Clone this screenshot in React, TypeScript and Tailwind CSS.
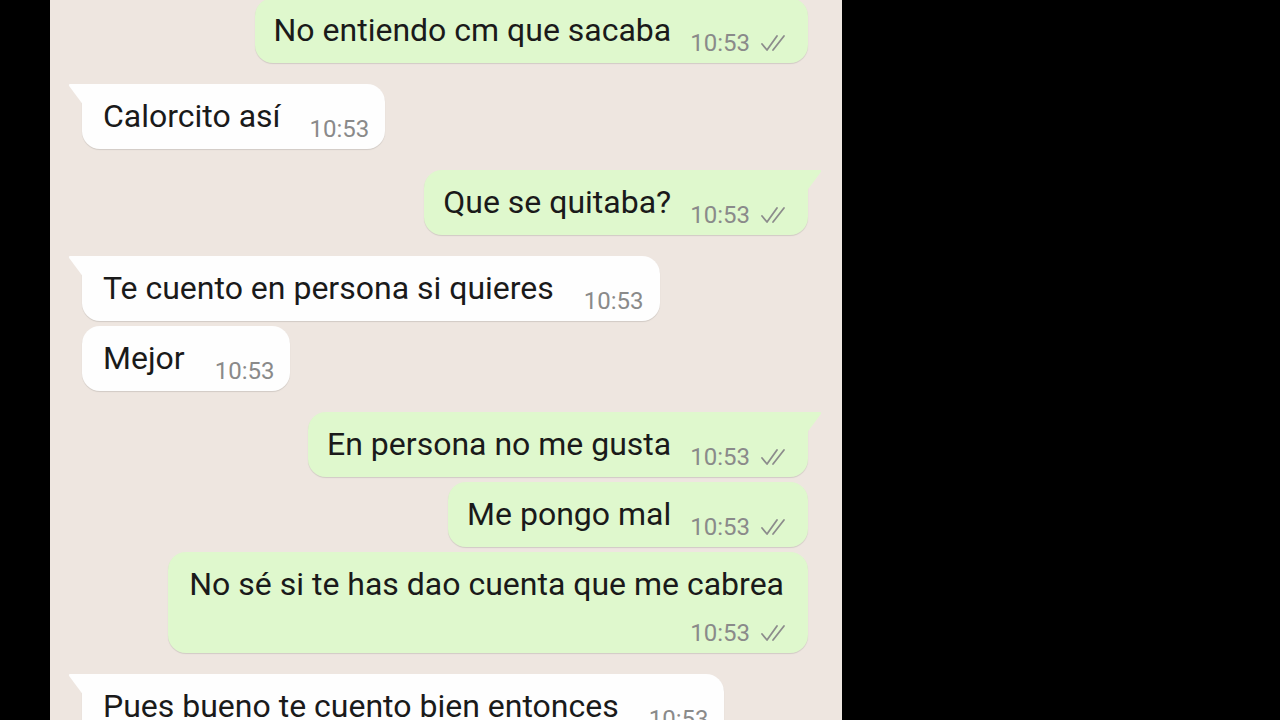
import React from 'react'

type Msg = {
  text: string
  out: boolean
  tail: boolean
  gap: number // espacio al tiempo (en línea)
  wrap?: boolean
}

const MESSAGES: Msg[] = [
  { text: 'No entiendo cm que sacaba', out: true, tail: false, gap: 19 },
  { text: 'Calorcito así', out: false, tail: true, gap: 29 },
  { text: 'Que se quitaba?', out: true, tail: true, gap: 19 },
  { text: 'Te cuento en persona si quieres', out: false, tail: true, gap: 30 },
  { text: 'Mejor', out: false, tail: false, gap: 30 },
  { text: 'En persona no me gusta', out: true, tail: true, gap: 19 },
  { text: 'Me pongo mal', out: true, tail: false, gap: 19 },
  { text: 'No sé si te has dao cuenta que me cabrea', out: true, tail: false, gap: 0, wrap: true },
  { text: 'Pues bueno te cuento bien entonces', out: false, tail: true, gap: 30 },
]

const Checks = () => (
  <svg width="32" height="20" viewBox="0 0 32 20" className="ml-[8px] shrink-0">
    <path d="M4 11 L9 17 L19 3" fill="none" stroke="#8c8c8c" strokeWidth="1.8" strokeLinecap="round" strokeLinejoin="round" />
    <path d="M15 17 L26 3" fill="none" stroke="#8c8c8c" strokeWidth="1.8" strokeLinecap="round" />
  </svg>
)

const Time = ({ out }: { out: boolean }) => (
  <span className="flex items-center text-[24px] leading-none text-[#8a8a8a]">
    10:53
    {out && <Checks />}
  </span>
)

const Tail = ({ out }: { out: boolean }) =>
  out ? (
    <svg width="16" height="22" viewBox="0 0 16 22" className="absolute -right-[14px] top-0">
      <path d="M0 0 H14 Q16 0 14.5 2.5 L0 22 Z" fill="#dff8cd" />
    </svg>
  ) : (
    <svg width="16" height="22" viewBox="0 0 16 22" className="absolute -left-[14px] top-0">
      <path d="M16 0 H2 Q0 0 1.5 2.5 L16 22 Z" fill="#fefefe" />
    </svg>
  )

function Bubble({ m, first }: { m: Msg; first: boolean }) {
  const bg = m.out ? 'bg-[#dff8cd]' : 'bg-[#fefefe]'
  const corner = m.tail ? (m.out ? 'rounded-tr-none' : 'rounded-tl-none') : ''
  const mt = first ? '-mt-[2px]' : m.tail ? 'mt-[21px]' : 'mt-[5px]'
  return (
    <div className={`flex ${m.out ? 'justify-end' : 'justify-start'} ${mt}`}>
      <div className={`relative ${bg} ${corner} rounded-[18px] shadow-[0_1px_1px_rgba(0,0,0,0.12)]`}>
        {m.tail && <Tail out={m.out} />}
        {m.wrap ? (
          <div className="h-[101px] pl-[21px] pr-[24px] pt-[14px] flex flex-col">
            <span className="text-[32px] leading-[36px] text-[#1a1a1a]">{m.text}</span>
            <div className="flex justify-end mt-[19px] -mr-[6px]">
              <Time out={m.out} />
            </div>
          </div>
        ) : (
          <div className={`h-[65px] flex items-center ${m.out ? 'pl-[19px] pr-[18px]' : 'pl-[21px] pr-[16px]'}`}>
            <span className="text-[32px] leading-none text-[#1a1a1a] -mt-[1px]">{m.text}</span>
            <span className="mt-[24px]" style={{ marginLeft: m.gap }}>
              <Time out={m.out} />
            </span>
          </div>
        )}
      </div>
    </div>
  )
}

export default function App() {
  return (
    <main className="w-[1280px] h-[720px] bg-black overflow-hidden font-['Roboto',sans-serif]">
      <div className="ml-[50px] w-[792px] h-[720px] bg-[#eee6e0] overflow-hidden pl-[32px] pr-[34px]">
        {MESSAGES.map((m, i) => (
          <Bubble key={i} m={m} first={i === 0} />
        ))}
      </div>
    </main>
  )
}
